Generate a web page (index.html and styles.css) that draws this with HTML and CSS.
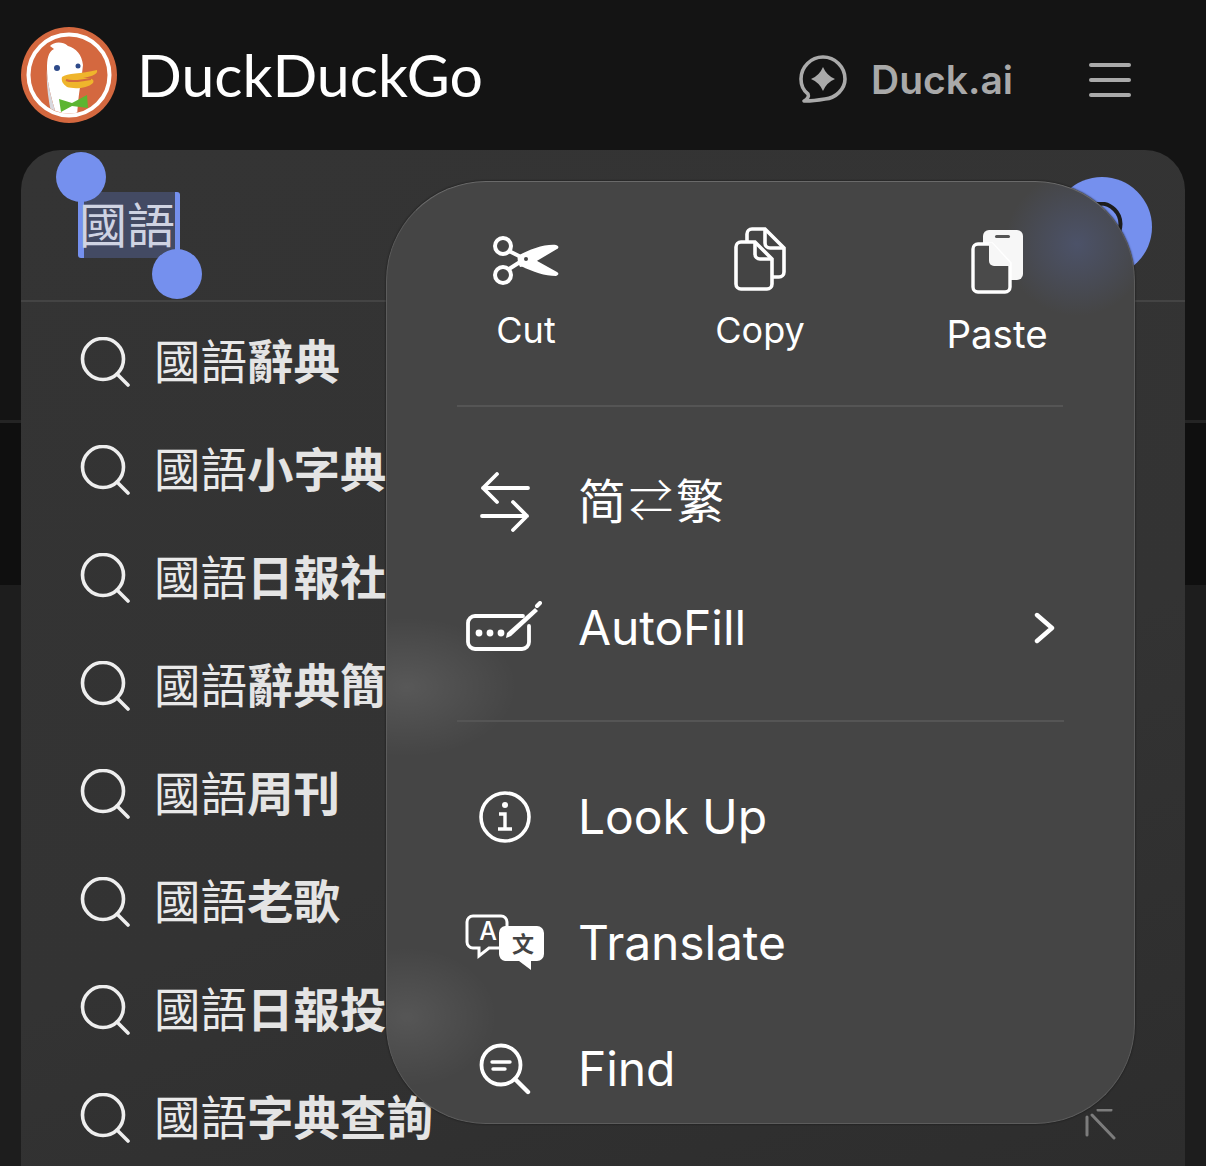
FILE: index.html
```html
<!DOCTYPE html>
<html lang="en">
<head>
  <meta charset="UTF-8">
  <title>DuckDuckGo</title>
  <link rel="stylesheet" href="styles.css">
</head>
<body>
<div class="page">
  <header class="topbar">
    <div class="brand">
      <svg class="logo" viewBox="0 0 96 96">
        <defs><clipPath id="inner"><circle cx="48" cy="48" r="38.5"/></clipPath></defs>
        <circle cx="48" cy="48" r="48" fill="#d4683f"/>
        <circle cx="48" cy="48" r="40.5" fill="#d4683f" stroke="#fff" stroke-width="4"/>
        <g clip-path="url(#inner)">
          <path d="M29 19C33 15 41 14 47 19C55 21 61 28 62 38L60 55C58 65 57 75 56 90L36 90C30 70 26 55 26 42C26 32 27 25 33 22Z" fill="#fff"/>
          <path d="M26 42C26 55 30 70 36 90L31 90C27 72 25 55 26 42Z" fill="#d8d8de"/>
        </g>
        <path d="M41 50C46 46 60 47 76 43C77 47 72 49 62 51C70 51 74 52 72 56C66 62 52 62 46 60C42 57 40 54 41 50Z" fill="#efb52c"/>
        <path d="M45 53C52 56 60 53 70 52" fill="none" stroke="#d4683f" stroke-width="2"/>
        <circle cx="36" cy="41" r="3" fill="#2e4a8a"/>
        <circle cx="57" cy="39" r="2.5" fill="#2e4a8a"/>
        <path d="M38 72L51 76L66 68L67 81L51 79L40 85Z" fill="#5cb531"/>
      </svg>
      <span class="wordmark">DuckDuckGo</span>
    </div>
    <div class="topnav">
      <svg class="chat-icon" viewBox="0 0 48 48">
        <path d="M7 46C13 46 20 45 26 44C37 43 46 34 46 24C46 12 36 2 24 2C12 2 2 12 2 24C2 31 5 36 9 39C10 41 9 44 5 46Z" fill="none" stroke="#aaa" stroke-width="3.6" stroke-linejoin="round"/>
        <path d="M24 12Q27.5 20.5 36 24Q27.5 27.5 24 36Q20.5 27.5 12 24Q20.5 20.5 24 12Z" fill="#aaa"/>
      </svg>
      <span class="duckai">Duck.ai</span>
      <div class="burger"><i></i><i></i><i></i></div>
    </div>
  </header>

  <main class="panel">
    <div class="search-row">
      <span class="selected">國語</span>
      <button class="search-btn">
        <svg viewBox="0 0 50 50"><circle cx="23" cy="22" r="20.5" fill="none" stroke="#1d1d1d" stroke-width="4"/><path d="M37 37L48 48" stroke="#1d1d1d" stroke-width="4" stroke-linecap="round"/></svg>
      </button>
    </div>
    <ul class="results">
      <li class="result"><svg class="glass" viewBox="0 0 50 50"><circle cx="23" cy="22" r="20.5" fill="none" stroke="#eee" stroke-width="3.6"/><path d="M37 37L48 48" stroke="#eee" stroke-width="3.6" stroke-linecap="round"/></svg><span class="term">國語<b>辭典</b></span></li>
      <li class="result"><svg class="glass" viewBox="0 0 50 50"><circle cx="23" cy="22" r="20.5" fill="none" stroke="#eee" stroke-width="3.6"/><path d="M37 37L48 48" stroke="#eee" stroke-width="3.6" stroke-linecap="round"/></svg><span class="term">國語<b>小字典</b></span></li>
      <li class="result"><svg class="glass" viewBox="0 0 50 50"><circle cx="23" cy="22" r="20.5" fill="none" stroke="#eee" stroke-width="3.6"/><path d="M37 37L48 48" stroke="#eee" stroke-width="3.6" stroke-linecap="round"/></svg><span class="term">國語<b>日報社</b></span></li>
      <li class="result"><svg class="glass" viewBox="0 0 50 50"><circle cx="23" cy="22" r="20.5" fill="none" stroke="#eee" stroke-width="3.6"/><path d="M37 37L48 48" stroke="#eee" stroke-width="3.6" stroke-linecap="round"/></svg><span class="term">國語<b>辭典簡</b></span></li>
      <li class="result"><svg class="glass" viewBox="0 0 50 50"><circle cx="23" cy="22" r="20.5" fill="none" stroke="#eee" stroke-width="3.6"/><path d="M37 37L48 48" stroke="#eee" stroke-width="3.6" stroke-linecap="round"/></svg><span class="term">國語<b>周刊</b></span></li>
      <li class="result"><svg class="glass" viewBox="0 0 50 50"><circle cx="23" cy="22" r="20.5" fill="none" stroke="#eee" stroke-width="3.6"/><path d="M37 37L48 48" stroke="#eee" stroke-width="3.6" stroke-linecap="round"/></svg><span class="term">國語<b>老歌</b></span></li>
      <li class="result"><svg class="glass" viewBox="0 0 50 50"><circle cx="23" cy="22" r="20.5" fill="none" stroke="#eee" stroke-width="3.6"/><path d="M37 37L48 48" stroke="#eee" stroke-width="3.6" stroke-linecap="round"/></svg><span class="term">國語<b>日報投</b></span></li>
      <li class="result"><svg class="glass" viewBox="0 0 50 50"><circle cx="23" cy="22" r="20.5" fill="none" stroke="#eee" stroke-width="3.6"/><path d="M37 37L48 48" stroke="#eee" stroke-width="3.6" stroke-linecap="round"/></svg><span class="term">國語<b>字典查詢</b></span>
        <svg class="fill-arrow" viewBox="0 0 32 32"><path d="M8 6L30 29M3 8V26M14 1H27" stroke="#7c7c7c" stroke-width="3" stroke-linecap="round" fill="none"/></svg>
      </li>
    </ul>
  </main>

  <section class="menu">
    <div class="tools">
      <div class="tool">
        <svg class="ico-cut" viewBox="0 0 66 50">
          <circle cx="10" cy="10" r="8" fill="none" stroke="#fff" stroke-width="4"/>
          <circle cx="10" cy="39" r="8" fill="none" stroke="#fff" stroke-width="4"/>
          <path d="M16 15L28 21M16 33L27 26" stroke="#fff" stroke-width="4"/>
          <path d="M25 20C37 13 52 8 63 9C66 10 66 12 64 13L37 29L27 31C25 27 24 23 25 20Z" fill="#fff"/>
          <path d="M37 21L64 36C66 37 66 39 63 40C52 40 40 36 28 30Z" fill="#fff"/>
          <circle cx="33" cy="23" r="2" fill="#444"/>
        </svg>
        <span class="tool-label">Cut</span>
      </div>
      <div class="tool">
        <svg class="ico-copy" viewBox="0 0 52 64">
          <path d="M18 2H31L50 21V45A5 5 0 0 1 45 50H18A5 5 0 0 1 13 45V7A5 5 0 0 1 18 2Z" fill="#444" stroke="#fff" stroke-width="3.6"/>
          <path d="M31 2V16A5 5 0 0 0 36 21H50" fill="none" stroke="#fff" stroke-width="3.6"/>
          <path d="M7 15H21L38 32V57A5 5 0 0 1 33 62H7A5 5 0 0 1 2 57V20A5 5 0 0 1 7 15Z" fill="#444" stroke="#fff" stroke-width="3.6"/>
          <path d="M21 15V27A5 5 0 0 0 26 32H38" fill="none" stroke="#fff" stroke-width="3.6"/>
        </svg>
        <span class="tool-label">Copy</span>
      </div>
      <div class="tool tool-paste">
        <svg class="ico-paste" viewBox="0 0 52 64">
          <rect x="12" y="0" width="40" height="50" rx="6" fill="#f7f7f7"/>
          <rect x="24" y="5" width="15" height="3" rx="1.5" fill="#555"/>
          <path d="M7 14H21L39 33V57A5 5 0 0 1 34 62H7A5 5 0 0 1 2 57V19A5 5 0 0 1 7 14Z" fill="#4a4a4a" stroke="#fff" stroke-width="3.4"/>
          <path d="M18 13H21L39 33V36H23A5 5 0 0 1 18 31Z" fill="#f7f7f7"/>
        </svg>
        <span class="tool-label">Paste</span>
      </div>
    </div>
    <div class="group">
      <div class="item">
        <span class="item-icon"><svg class="ico-swap" viewBox="0 0 50 60"><path d="M48 16H3M17 2L3 16L17 30M2 44H47M33 30L47 44L33 58" fill="none" stroke="#fff" stroke-width="3.8" stroke-linecap="round" stroke-linejoin="round"/></svg></span>
        <span class="item-text zh">简<span class="zh-arrow">⇄</span>繁</span>
      </div>
      <div class="item">
        <span class="item-icon"><svg class="ico-fill" viewBox="0 0 76 50"><path d="M57 15H9A7 7 0 0 0 2 22V41A7 7 0 0 0 9 48H56A7 7 0 0 0 63 41V25" fill="none" stroke="#fff" stroke-width="3.8" stroke-linecap="round"/><circle cx="13" cy="32" r="3.4" fill="#fff"/><circle cx="24" cy="32" r="3.4" fill="#fff"/><circle cx="35" cy="32" r="3.4" fill="#fff"/><path d="M41 32L69 7L72 10L45 35L40 37Z" fill="#fff"/><path d="M71 5L74 2" stroke="#fff" stroke-width="4" stroke-linecap="round"/></svg></span>
        <span class="item-text">AutoFill</span>
        <svg class="chevron" viewBox="0 0 22 32"><path d="M3 3L18 16L3 29" fill="none" stroke="#fff" stroke-width="4.4" stroke-linecap="round" stroke-linejoin="round"/></svg>
      </div>
    </div>
    <div class="group">
      <div class="item">
        <span class="item-icon"><svg class="ico-info" viewBox="0 0 52 52"><circle cx="26" cy="26" r="24" fill="none" stroke="#fff" stroke-width="3.6"/><circle cx="26" cy="14" r="3" fill="#fff"/><path d="M20 23H26V37M19 38H33" fill="none" stroke="#fff" stroke-width="3.4"/></svg></span>
        <span class="item-text">Look Up</span>
      </div>
      <div class="item">
        <span class="item-icon"><svg class="ico-translate" viewBox="0 0 80 58">
          <path d="M8 2H36A6 6 0 0 1 42 8V30A6 6 0 0 1 36 34H24L14 42L14 34H8A6 6 0 0 1 2 28V8A6 6 0 0 1 8 2Z" fill="none" stroke="#fff" stroke-width="3"/>
          <text x="23" y="26" class="glyph-a">A</text>
          <path d="M40 12H72A7 7 0 0 1 79 19V40A7 7 0 0 1 72 47H66V56L54 47H40A7 7 0 0 1 34 40V19A7 7 0 0 1 40 12Z" fill="#fff"/>
          <text x="58" y="38" class="glyph-wen">文</text>
        </svg></span>
        <span class="item-text">Translate</span>
      </div>
      <div class="item">
        <span class="item-icon"><svg class="ico-find" viewBox="0 0 52 52"><circle cx="22" cy="22" r="19.5" fill="none" stroke="#fff" stroke-width="3.8"/><path d="M13 19H31M14 26H26" stroke="#fff" stroke-width="3.4" stroke-linecap="round"/><path d="M36 36L49 49" stroke="#fff" stroke-width="4.4" stroke-linecap="round"/></svg></span>
        <span class="item-text">Find</span>
      </div>
    </div>
  </section>
</div>
</body>
</html>
```
FILE: styles.css
```css
* { box-sizing: border-box; }
html, body { margin: 0; padding: 0; }
body { background: #141414; font-family: "Inter", "Liberation Sans", sans-serif; }

.page {
  position: relative;
  width: 1206px;
  height: 1166px;
  overflow: hidden;
  background: linear-gradient(to bottom, #141414 0, #141414 420px, #242424 420px, #242424 423px, #0f0f0f 423px, #0f0f0f 585px, #1d1d1d 585px);
}

/* top bar */
.topbar {
  height: 150px;
  padding: 27px 75px 0 21px;
  display: flex;
  justify-content: space-between;
  align-items: flex-start;
  background: #141414;
}
.brand { display: flex; align-items: flex-start; gap: 20px; }
.logo { width: 96px; height: 96px; display: block; }
.wordmark {
  font-family: "Lato", sans-serif;
  font-size: 59px;
  line-height: 96px;
  color: #fff;
}
.topnav { display: flex; align-items: center; height: 106px; }
.chat-icon { width: 48px; height: 48px; display: block; margin-right: 24px; margin-top: -2px; }
.duckai { font-size: 39px; font-weight: 600; color: #a9a9a9; margin-right: 76px; margin-top: -2px; }
.burger { width: 42px; display: flex; flex-direction: column; gap: 10.5px; }
.burger i { display: block; height: 4.5px; border-radius: 3px; background: #aaa; }

/* search panel */
.panel {
  margin: 0 21px;
  height: 1016px;
  background: linear-gradient(160deg, #343434 0%, #333 60%, #2d2d2d 100%);
  border-radius: 40px 40px 0 0;
}
.search-row {
  position: relative;
  height: 152px;
  padding: 42px 0 0 57px;
  border-bottom: 2px solid #444;
}
.selected {
  position: relative;
  display: block;
  width: 102px;
  height: 66px;
  padding-left: 1px;
  font-family: "Noto Sans CJK TC", sans-serif;
  font-size: 48px;
  line-height: 60px;
  white-space: nowrap;
  color: #cfd3e2;
  background:
    linear-gradient(#7590ee, #7590ee) left / 6px 100% no-repeat,
    linear-gradient(#7590ee, #7590ee) right / 5px 100% no-repeat,
    #434a63;
  border-radius: 3px;
}
.selected::before,
.selected::after {
  content: "";
  position: absolute;
  width: 50px;
  height: 50px;
  border-radius: 50%;
  background: #7590ee;
}
.selected::before { left: -22px; top: -40px; }
.selected::after { left: 74px; top: 57px; }
.search-btn {
  position: absolute;
  left: 1031px;
  top: 27px;
  width: 100px;
  height: 100px;
  padding: 25px;
  border: 0;
  border-radius: 50%;
  background: #7590ee;
}
.search-btn svg { display: block; width: 50px; height: 50px; }

/* suggestions */
.results { list-style: none; margin: 0; padding: 6px 0 0; }
.result {
  height: 108px;
  padding: 0 69px 0 59px;
  display: flex;
  align-items: center;
  gap: 24px;
}
.glass { width: 50px; height: 50px; flex: none; }
.term {
  font-family: "Noto Sans CJK TC", sans-serif;
  font-size: 46.5px;
  line-height: 60px;
  margin-bottom: 7px;
  color: #e9e9e9;
  white-space: nowrap;
}
.term b { font-weight: 700; color: #e4e4e4; }
.fill-arrow { width: 32px; height: 32px; margin-left: auto; margin-top: 14px; }

/* context menu */
.menu {
  position: absolute;
  left: 386px;
  top: 181px;
  width: 749px;
  height: 943px;
  padding: 0 70px;
  overflow: hidden;
  border-radius: 100px;
  border: 1px solid #5c5c5c;
  border-top-color: #6a6a6a;
  color: #fff;
  background:
    radial-gradient(circle at 690px 62px, rgba(95, 118, 200, .27) 0, rgba(95, 118, 200, .14) 35px, rgba(95, 118, 200, 0) 72px),
    radial-gradient(ellipse 110px 70px at 20px 505px, rgba(255, 255, 255, .1) 0, rgba(255, 255, 255, 0) 100%),
    radial-gradient(ellipse 90px 70px at 20px 835px, rgba(255, 255, 255, .09) 0, rgba(255, 255, 255, 0) 100%),
    #454545;
  box-shadow: 0 0 2px #111;
}
.tools {
  height: 225px;
  margin: 0 -48px;
  padding-top: 44px;
  display: grid;
  grid-template-columns: 234px 234px 240px;
  position: relative;
}
.tools::after {
  content: "";
  position: absolute;
  left: 48px;
  right: 49px;
  bottom: 0;
  height: 2px;
  background: #555;
}
.tool { display: flex; flex-direction: column; align-items: center; height: 130px; position: relative; }
.tool svg { display: block; }
.tool-label { position: absolute; top: 79px; font-size: 36px; line-height: 50px; white-space: nowrap; }
.ico-cut { width: 66px; height: 50px; margin-top: 10px; }
.ico-copy { width: 52px; height: 64px; margin-top: 1px; }
.ico-paste { width: 52px; height: 64px; margin-top: 4px; }
.tool-paste .tool-label { top: 83px; font-size: 38.5px; }

.group { padding: 32px 0 29px; }
.group + .group { border-top: 2px solid #555; }
.item { height: 126px; display: flex; align-items: center; gap: 25px; }
.item-icon { width: 96px; flex: none; display: flex; justify-content: center; }
.item-icon svg { display: block; }
.item-text { font-size: 48px; line-height: 60px; letter-spacing: -.1px; white-space: nowrap; }
.zh { font-family: "Noto Sans CJK SC", sans-serif; font-weight: 400; display: flex; align-items: center; margin-bottom: 8px; letter-spacing: 0; }
.zh-arrow { font-size: 44px; font-weight: 300; margin: 0 3px; }
.chevron { width: 22px; height: 32px; margin-left: auto; margin-right: 8px; }
.ico-swap { width: 50px; height: 60px; margin-top: -1px; }
.ico-fill { width: 76px; height: 50px; margin-left: -2px; margin-top: -4px; }
.ico-info { width: 52px; height: 52px; }
.ico-translate { width: 80px; height: 58px; }
.glyph-a { font-size: 25px; font-weight: 500; fill: #fff; text-anchor: middle; }
.glyph-wen { font-family: "Noto Sans CJK SC", sans-serif; font-size: 22px; font-weight: 700; fill: #444; text-anchor: middle; }
.ico-find { width: 52px; height: 52px; }
```
